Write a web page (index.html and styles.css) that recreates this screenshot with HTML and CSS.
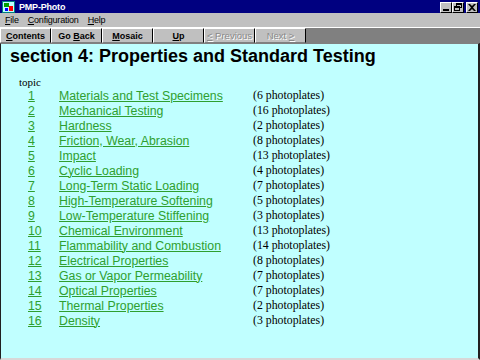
FILE: index.html
```html
<!DOCTYPE html>
<html>
<head>
  <title>PMP-Photo</title>
  <link rel="stylesheet" href="styles.css">
</head>
<body>
  <div class="window">
    <div class="titlebar">
      <div class="app-icon">
        <svg width="13" height="12" viewBox="0 0 13 12">
          <rect x="0" y="0" width="13" height="12" fill="#008080"/>
          <rect x="1" y="1" width="11" height="10" fill="#c0ffff"/>
          <rect x="2" y="2" width="5" height="4" fill="#00a000"/>
          <rect x="7" y="5" width="4" height="5" fill="#ff0000"/>
          <rect x="3" y="7" width="3" height="3" fill="#0000ff"/>
        </svg>
      </div>
      <div class="title">PMP-Photo</div>
      <div class="controls">
        <span class="ctl"><svg width="8" height="7" viewBox="0 0 8 7"><rect x="1" y="5" width="6" height="2" fill="#000"/></svg></span>
        <span class="ctl"><svg width="8" height="8" viewBox="0 0 8 8"><rect x="2.5" y="0.5" width="5" height="4" fill="none" stroke="#000"/><rect x="2" y="0" width="6" height="2" fill="#000"/><rect x="0.5" y="3.5" width="5" height="4" fill="#c0c0c0" stroke="#000"/><rect x="0" y="3" width="6" height="2" fill="#000"/></svg></span>
        <span class="ctl close"><svg width="8" height="7" viewBox="0 0 8 7"><path d="M0 0h2l2 2 2-2h2L5 3.5 8 7H6L4 5 2 7H0l3-3.5z" fill="#000"/></svg></span>
      </div>
    </div>
    <div class="menubar">
      <span class="menu"><u>F</u>ile</span>
      <span class="menu"><u>C</u>onfiguration</span>
      <span class="menu"><u>H</u>elp</span>
    </div>
    <div class="toolbar">
      <span class="tbtn"><span><u>C</u>ontents</span></span>
      <span class="tbtn"><span>Go <u>B</u>ack</span></span>
      <span class="tbtn"><span><u>M</u>osaic</span></span>
      <span class="tbtn"><span><u>U</u>p</span></span>
      <span class="tbtn disabled"><span><u>&lt;</u> Previous</span></span>
      <span class="tbtn disabled"><span>Next <u>&gt;</u></span></span>
      <span class="tfill"></span>
    </div>
    <div class="content">
      <h1 class="heading">section 4: Properties and Standard Testing</h1>
      <div class="topic">topic</div>
      <div class="topics">
        <a class="num" href="#">1</a><a class="name" href="#">Materials and Test Specimens</a><span class="count">(6 photoplates)</span>
        <a class="num" href="#">2</a><a class="name" href="#">Mechanical Testing</a><span class="count">(16 photoplates)</span>
        <a class="num" href="#">3</a><a class="name" href="#">Hardness</a><span class="count">(2 photoplates)</span>
        <a class="num" href="#">4</a><a class="name" href="#">Friction, Wear, Abrasion</a><span class="count">(8 photoplates)</span>
        <a class="num" href="#">5</a><a class="name" href="#">Impact</a><span class="count">(13 photoplates)</span>
        <a class="num" href="#">6</a><a class="name" href="#">Cyclic Loading</a><span class="count">(4 photoplates)</span>
        <a class="num" href="#">7</a><a class="name" href="#">Long-Term Static Loading</a><span class="count">(7 photoplates)</span>
        <a class="num" href="#">8</a><a class="name" href="#">High-Temperature Softening</a><span class="count">(5 photoplates)</span>
        <a class="num" href="#">9</a><a class="name" href="#">Low-Temperature Stiffening</a><span class="count">(3 photoplates)</span>
        <a class="num" href="#">10</a><a class="name" href="#">Chemical Environment</a><span class="count">(13 photoplates)</span>
        <a class="num" href="#">11</a><a class="name" href="#">Flammability and Combustion</a><span class="count">(14 photoplates)</span>
        <a class="num" href="#">12</a><a class="name" href="#">Electrical Properties</a><span class="count">(8 photoplates)</span>
        <a class="num" href="#">13</a><a class="name" href="#">Gas or Vapor Permeability</a><span class="count">(7 photoplates)</span>
        <a class="num" href="#">14</a><a class="name" href="#">Optical Properties</a><span class="count">(7 photoplates)</span>
        <a class="num" href="#">15</a><a class="name" href="#">Thermal Properties</a><span class="count">(2 photoplates)</span>
        <a class="num" href="#">16</a><a class="name" href="#">Density</a><span class="count">(3 photoplates)</span>
      </div>
    </div>
  </div>
</body>
</html>
```

FILE: styles.css
```css
body {
  margin: 0;
  width: 480px;
  height: 360px;
  overflow: hidden;
  background-color: #c0c0c0;
  font-family: "Liberation Sans", Arial, sans-serif;
}

.window {
  display: flex;
  flex-direction: column;
  height: 360px;
}

.titlebar {
  height: 13px;
  background-color: #000080;
  display: flex;
  align-items: center;
  padding: 0 2px 0 2px;
}

.app-icon {
  display: flex;
  width: 14px;
  margin-right: 3px;
}

.title {
  color: #ffffff;
  font-weight: bold;
  font-size: 9px;
  letter-spacing: -0.2px;
  flex: 1;
}

.controls {
  display: flex;
  padding-top: 1px;
}

.ctl {
  background-color: #c0c0c0;
  border-top: 1px solid #ffffff;
  border-left: 1px solid #ffffff;
  border-right: 1px solid #000000;
  border-bottom: 1px solid #000000;
  display: flex;
  align-items: center;
  justify-content: center;
  box-sizing: border-box;
  width: 12px;
  height: 11px;
}

.ctl.close {
  margin-left: 2px;
}

.menubar {
  height: 14px;
  display: flex;
  align-items: center;
  font-size: 9px;
  letter-spacing: -0.2px;
  padding-left: 5px;
  gap: 9px;
  color: #000000;
}

.toolbar {
  height: 15px;
  display: flex;
  border-top: 1px solid #ffffff;
}

.tbtn {
  width: 51px;
  box-sizing: border-box;
  border-top: 1px solid #ffffff;
  border-left: 1px solid #ffffff;
  border-right: 1px solid #000000;
  border-bottom: 1px solid #808080;
  font-size: 9px;
  font-weight: bold;
  display: flex;
  align-items: center;
  justify-content: center;
  color: #000000;
}

.tbtn.disabled {
  color: #8a8a8a;
  font-weight: normal;
  font-size: 9.5px;
  text-shadow: 1px 1px 0 #ffffff;
}

.tfill {
  flex: 1;
  background-color: #808080;
}

.content {
  flex: 1;
  background-color: #c0ffff;
  border-left: 1px solid #202020;
  border-right: 2px solid #202020;
  border-top: 1px solid #808080;
  border-bottom: 2px solid #d8d8d8;
  padding: 1px 0 0 9px;
}

.heading {
  margin: 0;
  font-size: 18px;
  font-weight: bold;
  line-height: 22px;
  color: #000000;
}

.topic {
  font-family: "Liberation Serif", "Times New Roman", serif;
  font-size: 11px;
  margin: 9px 0 0 9px;
  line-height: 12px;
}

.topics {
  display: grid;
  grid-template-columns: 31px 194px auto;
  margin-left: 18px;
  grid-auto-rows: 15px;
  align-items: center;
}

.num, .name {
  color: #2f9f2f;
  font-size: 12.3px;
  text-decoration: underline;
}

.count {
  font-family: "Liberation Serif", "Times New Roman", serif;
  font-size: 11.8px;
  color: #000000;
}
```
